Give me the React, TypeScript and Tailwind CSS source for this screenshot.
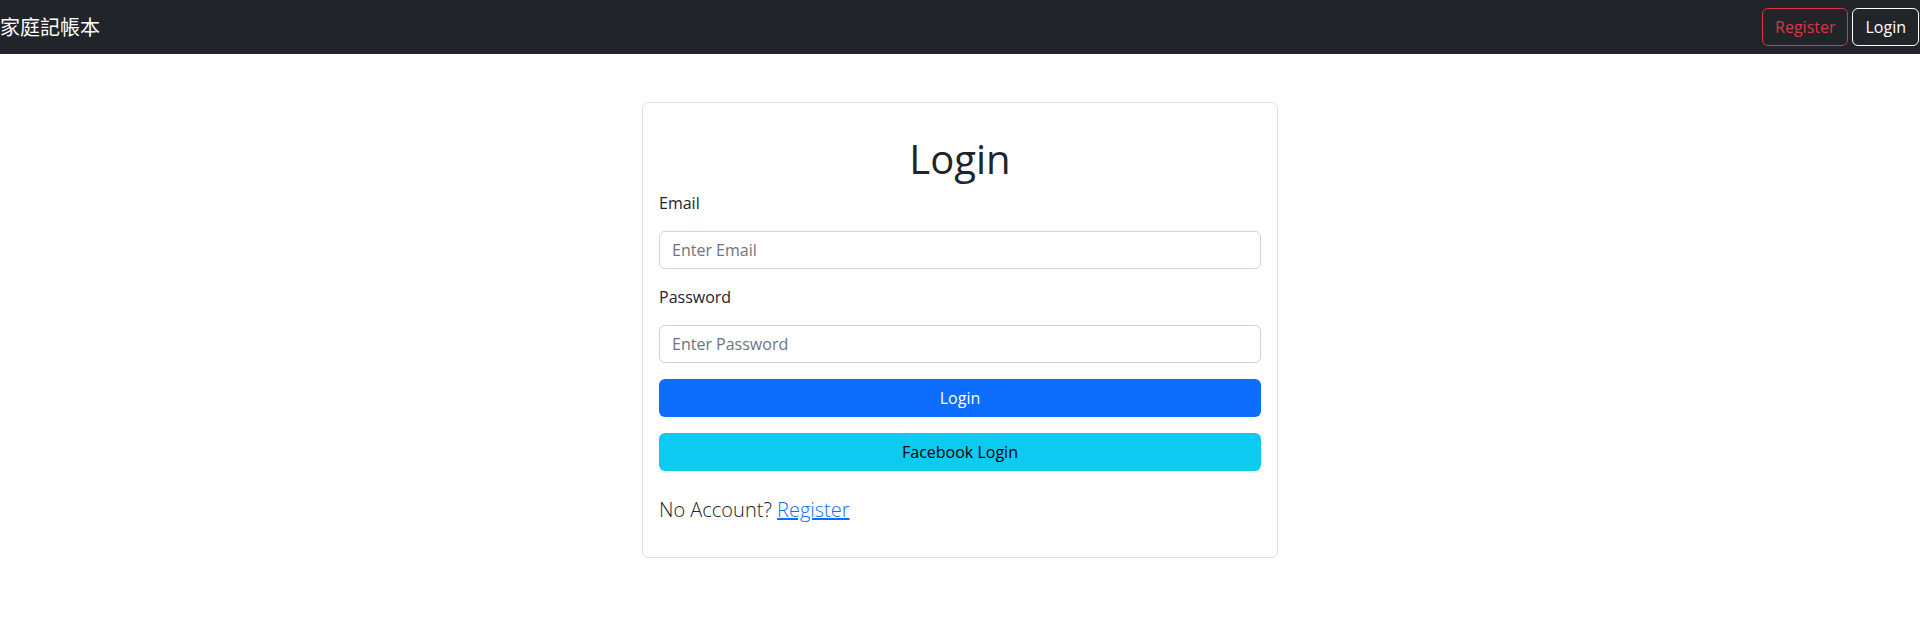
import React from "react";

export default function App() {
  const font = { fontFamily: '"Open Sans", "Noto Sans CJK TC", sans-serif' };
  return (
    <div className="min-h-[637px] bg-white text-[#212529]" style={font}>
      <nav className="h-[54px] bg-[#212529] flex items-center justify-between">
        <div className="text-white text-[20px] leading-[30px] font-['Noto_Sans_CJK_TC',sans-serif]">家庭記帳本</div>
        <div className="flex items-center gap-1 pr-[1px]">
          <button className="h-[38px] px-3 border border-[#dc3545] text-[#dc3545] rounded-[6px] text-[16px] leading-[24px]">Register</button>
          <button className="h-[38px] px-3 border border-white text-white rounded-[6px] text-[16px] leading-[24px]">Login</button>
        </div>
      </nav>
      <div className="w-[636px] mx-auto mt-[48px] border border-[#dee2e6] rounded-[6px] p-4">
        <h1 className="mt-4 text-center text-[40px] leading-[48px] font-normal">Login</h1>
        <label className="block mt-2 mb-4 text-[16px] leading-[24px]">Email</label>
        <input
          className="block w-full h-[38px] px-3 border border-[#ced4da] rounded-[6px] text-[16px] placeholder:text-[#6c757d] outline-none"
          placeholder="Enter Email"
        />
        <label className="block mt-4 mb-4 text-[16px] leading-[24px]">Password</label>
        <input
          type="password"
          className="block w-full h-[38px] px-3 border border-[#ced4da] rounded-[6px] text-[16px] placeholder:text-[#6c757d] outline-none"
          placeholder="Enter Password"
        />
        <button className="block w-full mt-4 h-[38px] rounded-[6px] bg-[#0d6efd] text-white text-[16px]">Login</button>
        <button className="block w-full mt-4 h-[38px] rounded-[6px] bg-[#0dcaf0] text-black text-[16px]">Facebook Login</button>
        <p className="mt-6 mb-4 text-[20px] leading-[30px] font-light">
          No Account? <a href="#" className="text-[#0d6efd] underline">Register</a>
        </p>
      </div>
    </div>
  );
}
